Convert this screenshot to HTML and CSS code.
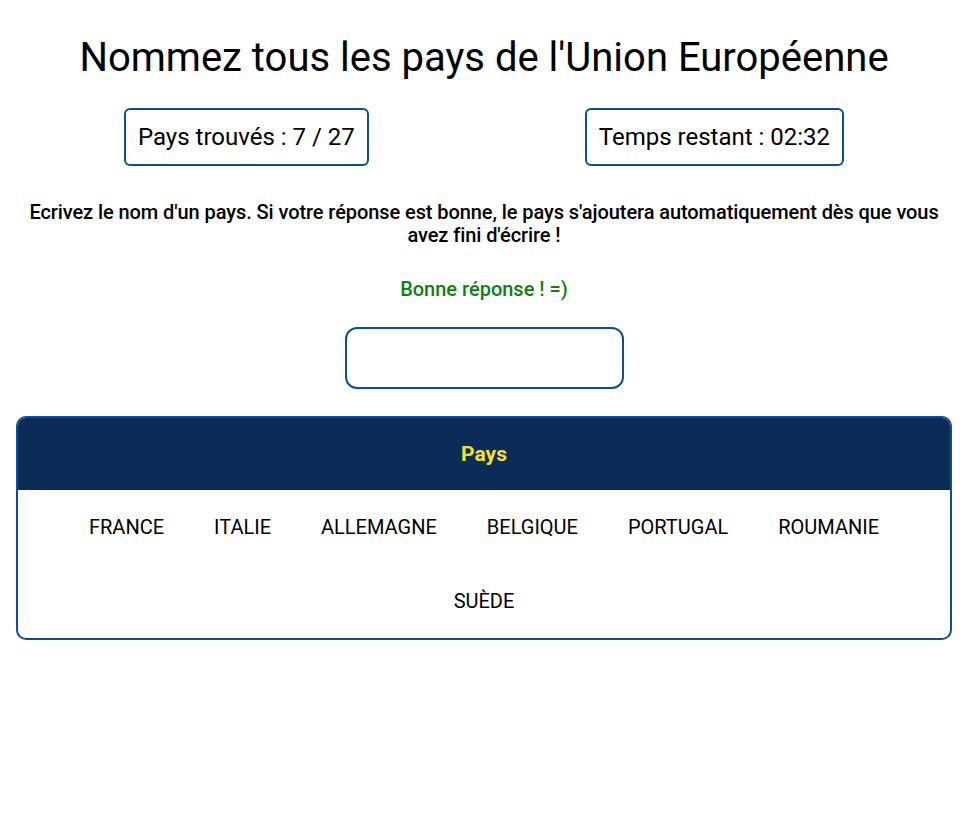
FILE: index.html
```html
<!DOCTYPE html>
<html lang="fr">
<head>
<meta charset="utf-8">
<title>Pays de l'Union Européenne</title>
<link rel="stylesheet" href="styles.css">
</head>
<body>
<main class="page">
  <h1 class="title">Nommez tous les pays de l'Union Européenne</h1>
  <div class="stats">
    <div class="stat">Pays trouvés : 7 / 27</div>
    <div class="stat">Temps restant : 02:32</div>
  </div>
  <p class="instructions">Ecrivez le nom d'un pays. Si votre réponse est bonne, le pays s'ajoutera automatiquement dès que vous avez fini d'écrire !</p>
  <p class="feedback">Bonne réponse ! =)</p>
  <div class="input-row">
    <input class="answer" type="text" aria-label="Nom d'un pays">
  </div>
  <section class="table">
    <div class="table-head">Pays</div>
    <div class="table-body">
      <span class="country">France</span>
      <span class="country">Italie</span>
      <span class="country">Allemagne</span>
      <span class="country">Belgique</span>
      <span class="country">Portugal</span>
      <span class="country">Roumanie</span>
      <span class="country">Suède</span>
    </div>
  </section>
</main>
</body>
</html>
```
FILE: styles.css
```css
* { box-sizing: border-box; }
html, body { margin: 0; padding: 0; background: #fff; }
body {
  font-family: Roboto, "Liberation Sans", Arial, sans-serif;
  color: #000;
}
.page {
  padding: 0 16px;
}
.title {
  margin: 0;
  padding-top: 34px;
  font-size: 40px;
  font-weight: 400;
  line-height: 48px;
  text-align: center;
}
.stats {
  display: flex;
  justify-content: space-around;
  margin-top: 26px;
}
.stat {
  border: 2px solid #0b4f9c;
  border-radius: 6px;
  padding: 14px 12px;
  font-size: 24px;
  line-height: 26px;
  font-weight: 400;
}
.instructions {
  margin: 35px 0 0;
  font-size: 20px;
  line-height: 23px;
  font-weight: 500;
  letter-spacing: -0.08px;
  text-align: center;
}
.feedback {
  margin: 31px 0 0;
  font-size: 20px;
  line-height: 23px;
  font-weight: 500;
  color: #0d800f;
  text-align: center;
}
.input-row {
  display: flex;
  justify-content: center;
  margin-top: 26px;
}
.answer {
  display: block;
  width: 279px;
  height: 62px;
  margin: 0;
  border: 2px solid #0b4f9c;
  border-radius: 12px;
  font-size: 20px;
  font-family: inherit;
  outline: none;
}
.table {
  margin-top: 27px;
  border: 2px solid #0b4f9c;
  border-radius: 10px;
  overflow: hidden;
}
.table-head {
  background: #0a2c56;
  color: #f3e12c;
  font-weight: 700;
  font-size: 21px;
  text-align: center;
  height: 72px;
  line-height: 72px;
}
.table-body {
  display: flex;
  flex-wrap: wrap;
  justify-content: center;
  padding: 0 40px;
}
.country {
  padding: 0 25px;
  font-size: 20px;
  text-transform: uppercase;
  height: 74px;
  line-height: 74px;
}
```
